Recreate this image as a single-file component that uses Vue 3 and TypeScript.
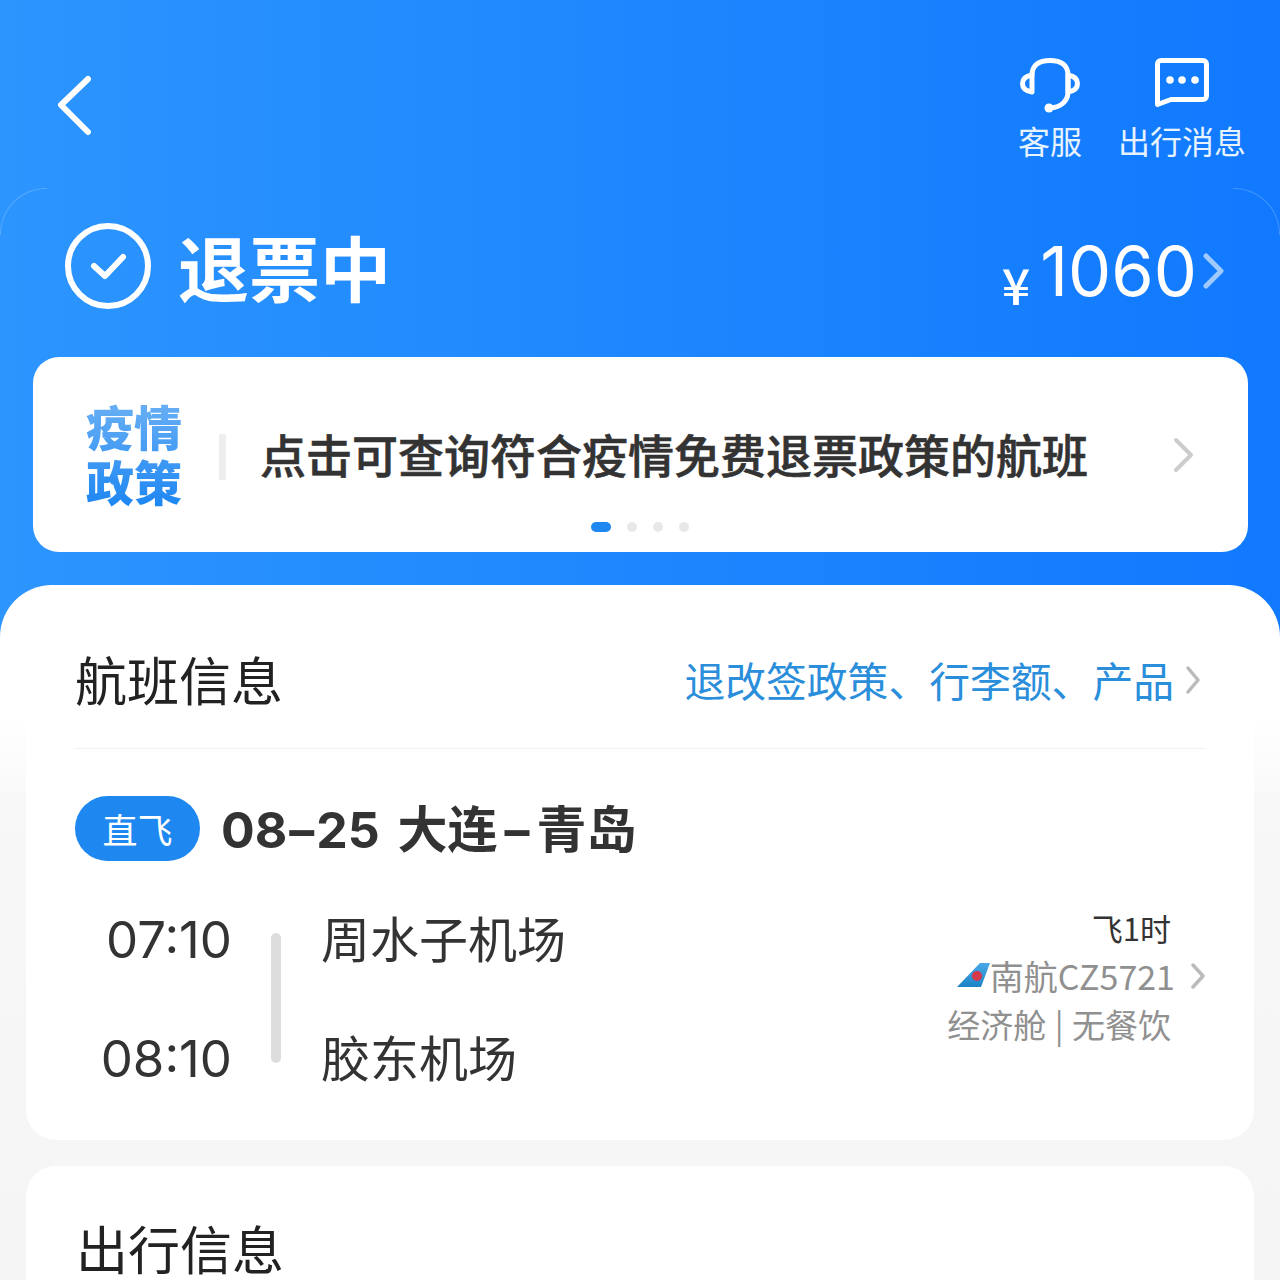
<script setup lang="ts">
const notes = ['active', '', '', ''];
</script>

<template>
  <div class="page">
    <header class="nav">
      <svg class="back" width="40" height="62" viewBox="0 0 40 62">
        <path d="M34 4 7 30l27 27" />
      </svg>
      <div class="nav-actions">
        <div class="nav-action">
          <svg width="64" height="62" viewBox="0 0 64 62">
            <path d="M14 21C14 11 21 6.500 32 6.500S50 11 50 21v17c0 9-7 15-17 16" />
            <path d="M14 21c-6 1-9.500 4-9.500 8.500S8 37 14 38z" />
            <path d="M50 21c6 1 9.500 4 9.500 8.500S56 37 50 38z" />
            <circle class="solid" cx="31" cy="54" r="4.500" />
          </svg>
          <span>客服</span>
        </div>
        <div class="nav-action">
          <svg width="60" height="62" viewBox="0 0 60 62">
            <path d="M9 6.500h42a3.500 3.500 0 0 1 3.500 3.500v32a3.500 3.500 0 0 1-3.500 3.500H19L5.500 50.500V10A3.500 3.500 0 0 1 9 6.500z" />
            <circle class="solid" cx="18" cy="26" r="3.800" />
            <circle class="solid" cx="30" cy="26" r="3.800" />
            <circle class="solid" cx="43" cy="26" r="3.800" />
          </svg>
          <span>出行消息</span>
        </div>
      </div>
    </header>

    <section class="status">
      <div class="status-left">
        <svg width="88" height="88" viewBox="0 0 88 88">
          <circle cx="44" cy="44" r="40" />
          <path d="M30 44l11 10 18-19" />
        </svg>
        <span class="status-title">退票中</span>
      </div>
      <div class="status-price">
        <span class="yen">¥</span>
        <span class="amount">1060</span>
        <svg width="24" height="38" viewBox="0 0 24 38"><path d="M4 4l15 15L4 34" /></svg>
      </div>
    </section>

    <section class="notice">
      <div class="notice-main">
        <div class="notice-tag">疫情<br />政策</div>
        <i class="notice-line"></i>
        <div class="notice-text">点击可查询符合疫情免费退票政策的航班</div>
        <svg width="24" height="36" viewBox="0 0 24 36"><path d="M4 3l15 15L4 33" /></svg>
      </div>
      <div class="dots">
        <i v-for="(n, i) in notes" :key="i" :class="n"></i>
      </div>
    </section>

    <main class="sheet">
      <section class="card flight">
        <div class="card-head">
          <h2>航班信息</h2>
          <div class="head-link">
            <span>退改签政策、行李额、产品</span>
            <svg class="chev" width="14" height="30" viewBox="0 0 14 30"><path d="M2 3l10 12L2 27" /></svg>
          </div>
        </div>

        <div class="route">
          <span class="pill">直飞</span>
          <span class="route-title">08<span class="dash">–</span>25 大连<span class="dash wide">–</span>青岛</span>
        </div>

        <div class="legs">
          <div class="times">
            <div>07:10</div>
            <div>08:10</div>
          </div>
          <i class="leg-bar"></i>
          <div class="airports">
            <div>周水子机场</div>
            <div>胶东机场</div>
          </div>
          <div class="meta">
            <div class="meta-row dark">飞1时</div>
            <div class="meta-row with-chev">
              <svg class="tail" width="33" height="24" viewBox="0 0 33 24">
                <defs>
                  <linearGradient id="tailFill" x1="0" y1="0" x2="0" y2="1">
                    <stop offset="0" stop-color="#4aa8e6" />
                    <stop offset="1" stop-color="#1c84c6" />
                  </linearGradient>
                </defs>
                <path fill="url(#tailFill)" d="M0 24 23 0h10l-9 24z" />
                <circle cx="20" cy="13" r="5" fill="#d6384c" />
              </svg>
              <span>南航CZ5721</span>
              <svg class="chev" width="14" height="28" viewBox="0 0 14 28"><path d="M2 3l10 11L2 25" /></svg>
            </div>
            <div class="meta-row small">经济舱 | 无餐饮</div>
          </div>
        </div>
      </section>

      <section class="card travel">
        <h2>出行信息</h2>
      </section>
    </main>
  </div>
</template>

<style>
html,
body {
  margin: 0;
  background: #f5f5f5;
}
</style>

<style scoped>
.page {
  width: 1280px;
  height: 1280px;
  overflow: hidden;
  background: linear-gradient(90deg, #2c95fe 0%, #1079fe 100%);
  font-family: "Noto Sans CJK SC", "Noto Sans", sans-serif;
  color: #333;
}

svg {
  display: block;
  flex-shrink: 0;
  fill: none;
  stroke-linecap: round;
  stroke-linejoin: round;
}

.nav {
  height: 188px;
  box-sizing: border-box;
  padding: 0 34px 0 54px;
  display: flex;
  justify-content: space-between;
  align-items: flex-start;
}

.back {
  margin-top: 75px;
  stroke: #fff;
  stroke-width: 6;
}

.nav-actions {
  display: flex;
  gap: 36px;
  margin-top: 54px;
}

.nav-action {
  display: flex;
  flex-direction: column;
  align-items: center;
  color: #e6f3ff;
  font-size: 32px;
  line-height: 48px;
  height: 112px;
}

.nav-action svg {
  stroke: #fff;
  stroke-width: 5;
  height: 62px;
}

.solid {
  fill: #fff;
  stroke: none;
}

.status {
  height: 169px;
  box-sizing: border-box;
  padding: 0 54px 14px 64px;
  display: flex;
  justify-content: space-between;
  align-items: center;
  position: relative;
}

.status::before,
.status::after {
  content: "";
  position: absolute;
  top: 0;
  width: 46px;
  height: 46px;
  border-top: 1px solid rgba(255, 255, 255, 0.2);
}

.status::before {
  left: 0;
  border-left: 1px solid rgba(255, 255, 255, 0.2);
  border-top-left-radius: 46px;
}

.status::after {
  right: 0;
  border-right: 1px solid rgba(255, 255, 255, 0.2);
  border-top-right-radius: 46px;
}

.status-left {
  display: flex;
  align-items: center;
  gap: 26px;
}

.status-left svg {
  stroke: #fff;
  stroke-width: 6;
}

.status-title {
  color: #fff;
  font-size: 71px;
  line-height: 88px;
  font-weight: 700;
  margin-bottom: 2px;
}

.status-price {
  display: flex;
  align-items: center;
  color: #fff;
  margin-top: 12px;
}

.yen {
  font-size: 50px;
  line-height: 50px;
  font-weight: 500;
  margin: 22px 10px 0 0;
}

.amount {
  font-family: Inter, "Noto Sans", sans-serif;
  font-size: 68.500px;
  line-height: 88px;
}

.status-price svg {
  margin: -2px 0 0 5px;
  stroke: rgba(255, 255, 255, 0.6);
  stroke-width: 5;
}

.notice {
  height: 195px;
  margin: 0 32px 0 33px;
  box-sizing: border-box;
  border-radius: 26px;
  background: #fff;
  padding: 41px 54px 0 53px;
  position: relative;
}

.notice-main {
  display: flex;
  align-items: center;
}

.notice-tag {
  font-size: 48px;
  line-height: 55px;
  font-weight: 900;
  color: #2f8ef0;
  background: linear-gradient(180deg, #6cb1f5, #1c86f2);
  -webkit-background-clip: text;
  background-clip: text;
  -webkit-text-fill-color: transparent;
}

.notice-line {
  width: 7px;
  height: 46px;
  margin: 8px 34px 0 37px;
  background: #eeeeee;
}

.notice-text {
  flex: 1;
  font-size: 46px;
  line-height: 60px;
  font-weight: 500;
  white-space: nowrap;
  -webkit-text-stroke: 0.6px #333;
}

.notice-main svg {
  stroke: #cccccc;
  stroke-width: 4;
  margin: 4px -2px 0 0;
}

.dots {
  position: absolute;
  top: 165px;
  left: 558px;
  display: flex;
  align-items: center;
  gap: 16px;
}

.dots i {
  width: 10px;
  height: 10px;
  border-radius: 50%;
  background: #e8e8e8;
}

.dots i.active {
  width: 20px;
  border-radius: 5px;
  background: #1e88f0;
}

.sheet {
  margin-top: 33px;
  height: 700px;
  padding: 0 26px;
  border-radius: 52px 52px 0 0;
  background: linear-gradient(180deg, #fff 0, #fff 130px, #f8f8f8 220px, #f5f5f5 100%);
}

.card {
  background: #fff;
  border-radius: 30px;
  padding: 0 49px;
}

.flight {
  height: 555px;
  box-sizing: border-box;
}

.travel {
  margin-top: 26px;
  padding: 51px 52px 60px 50px;
}

h2 {
  margin: 0;
  font-size: 52px;
  line-height: 62px;
  font-weight: 400;
  color: #222;
}

.card-head {
  height: 164px;
  box-sizing: border-box;
  padding-top: 31px;
  display: flex;
  justify-content: space-between;
  align-items: center;
  border-bottom: 1.500px solid #f0f0f0;
}

.card-head h2 {
  margin-bottom: 6px;
}

.head-link {
  display: flex;
  align-items: center;
  gap: 12px;
  color: #2a8edb;
  font-size: 40.800px;
  padding-right: 5px;
  white-space: nowrap;
  margin-bottom: 6px;
}

.head-link .chev {
  margin-top: 2px;
}

.chev {
  stroke: #bbbbbb;
  stroke-width: 3.500;
}

.route {
  margin-top: 47px;
  display: flex;
  align-items: center;
  gap: 21px;
}

.pill {
  width: 125px;
  height: 65px;
  border-radius: 33px;
  background: #1e88f0;
  color: #fff;
  font-size: 35px;
  line-height: 65px;
  text-align: center;
}

.route-title {
  font-family: Inter, "Noto Sans CJK SC", sans-serif;
  font-size: 50px;
  line-height: 62px;
  margin-top: 3px;
  font-weight: 700;
  word-spacing: 6px;
  white-space: nowrap;
}

.dash {
  margin: 0 2px;
}

.dash.wide {
  margin: 0 7px;
}

.legs {
  margin-top: 20px;
  display: flex;
}

.times {
  width: 157px;
  text-align: right;
  font-size: 51px;
  line-height: 119px;
  font-family: Inter, "Noto Sans", sans-serif;
  margin-top: -1px;
}

.leg-bar {
  align-self: center;
  width: 10px;
  height: 130px;
  margin: -4px 40px 0 39px;
  border-radius: 5px;
  background: #dddddd;
}

.airports {
  flex: 1;
  font-size: 49px;
  line-height: 119px;
  margin-top: -4px;
}

.meta {
  padding-top: 23px;
  font-size: 34px;
  line-height: 48px;
  color: #909090;
}

.meta-row {
  display: flex;
  justify-content: flex-end;
  align-items: center;
  padding-right: 34px;
}

.meta-row.dark {
  color: #333;
  font-size: 31px;
}

.meta-row.small {
  font-size: 33px;
  word-spacing: 1px;
}

.meta-row.with-chev {
  padding-right: 0;
}

.meta-row.with-chev .chev {
  margin-left: 16px;
}

.tail {
  margin-top: -2px;
}
</style>
